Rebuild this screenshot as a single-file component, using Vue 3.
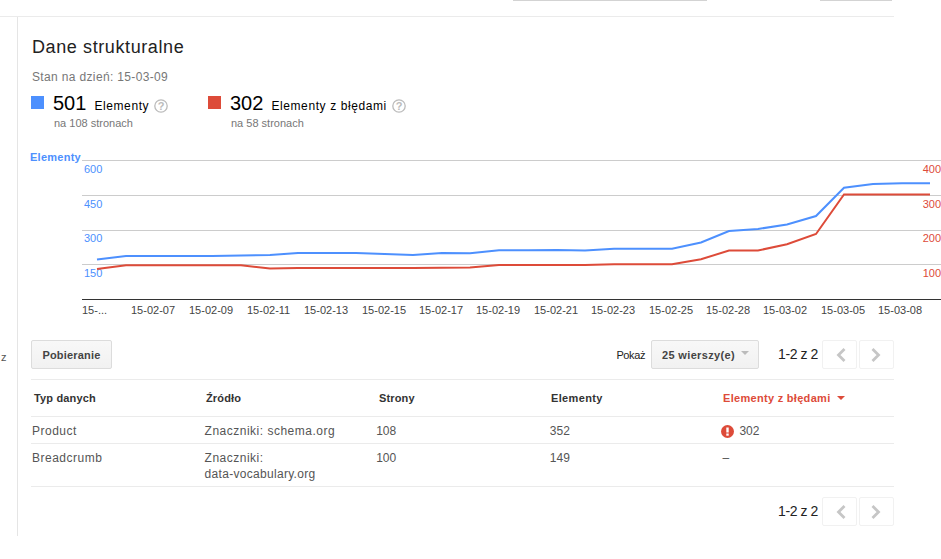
<script setup>
const grid = [10.5, 45.5, 80.5, 114.5]
const shift = a => a.map(p => [p[0], p[1] - 150])
const blue = shift([[97,259.5],[126,256],[212,256],[270,255],[298,253],[356,253],[413,255],[442,253],[470,253.3],[499,250.3],[528,250.3],[557,250],[585,250.5],[614,248.7],[672,248.7],[701,242.5],[729,231],[758,229],[787,224.5],[816,216],[844,187.7],[873,184],[902,183.2],[930,183.2]])
const red = shift([[97,269],[126,265.3],[241,265.3],[270,268.5],[298,268],[413,268],[470,267.5],[499,265],[585,265],[614,264.3],[672,264.3],[701,259.3],[729,250.5],[758,250.5],[787,244.3],[816,234],[844,194.5],[930,194.5]])
const pts = a => a.map(p => p.join(',')).join(' ')
const leftLabels = [['600',23],['450',58],['300',92],['150',127]]
const rightLabels = [['400',23],['300',58],['200',92],['100',127]]
const dates = [['15-...',82],['15-02-07',131],['15-02-09',189],['15-02-11',247],['15-02-13',304],['15-02-15',362],['15-02-17',419],['15-02-19',476],['15-02-21',534],['15-02-23',591],['15-02-25',649],['15-02-28',706],['15-03-02',763],['15-03-05',821],['15-03-08',878]]
const rows = [
  { type: 'Product', source: ['Znaczniki: schema.org'], pages: '108', items: '352', errors: '302' },
  { type: 'Breadcrumb', source: ['Znaczniki:', 'data-vocabulary.org'], pages: '100', items: '149', errors: '' }
]
</script>

<template>
  <div class="page">
    <div class="top-stubs">
      <span class="stub stub-a"></span>
      <span class="stub stub-b"></span>
    </div>
    <div class="shell">
      <span class="stray">z</span>
      <main class="panel">
        <h1 class="title">Dane strukturalne</h1>
        <p class="date">Stan na dzień: 15-03-09</p>
        <div class="legend">
          <div class="legend-item first">
            <span class="swatch blue"></span>
            <div>
              <div class="legend-head">
                <span class="num">501</span><span class="lab">Elementy</span>
                <svg class="help" viewBox="0 0 14 14"><circle cx="7" cy="7" r="6.2" fill="none" stroke="#bbb" stroke-width="1.3"/><text x="7" y="10.5" text-anchor="middle" class="help-t">?</text></svg>
              </div>
              <div class="legend-sub">na 108 stronach</div>
            </div>
          </div>
          <div class="legend-item">
            <span class="swatch red"></span>
            <div>
              <div class="legend-head">
                <span class="num">302</span><span class="lab">Elementy z błędami</span>
                <svg class="help" viewBox="0 0 14 14"><circle cx="7" cy="7" r="6.2" fill="none" stroke="#bbb" stroke-width="1.3"/><text x="7" y="10.5" text-anchor="middle" class="help-t">?</text></svg>
              </div>
              <div class="legend-sub">na 58 stronach</div>
            </div>
          </div>
        </div>
        <svg class="chart" width="941" height="190" viewBox="0 0 941 190">
          <text x="30" y="11" class="axis-title">Elementy</text>
          <line v-for="y in grid" :key="y" x1="82" x2="941" :y1="y" :y2="y" stroke="#ccc"/>
          <line x1="82" x2="941" y1="149.5" y2="149.5" stroke="#333"/>
          <text v-for="l in leftLabels" :key="l[0]" x="84" :y="l[1]" class="t-blue">{{ l[0] }}</text>
          <text v-for="l in rightLabels" :key="l[0]" x="941" :y="l[1]" text-anchor="end" class="t-red">{{ l[0] }}</text>
          <polyline :points="pts(blue)" fill="none" stroke="#4d90fe" stroke-width="2"/>
          <polyline :points="pts(red)" fill="none" stroke="#dd4b39" stroke-width="2"/>
          <text v-for="d in dates" :key="d[0]" :x="d[1]" y="164" class="t-date">{{ d[0] }}</text>
        </svg>
        <div class="toolbar">
          <button class="btn download">Pobieranie</button>
          <div class="tools-right">
            <span class="show">Pokaż</span>
            <button class="btn select">25 wierszy(e)<i class="caret"></i></button>
            <span class="range">1-2 z 2</span>
            <div class="pager">
              <span class="pg"><svg width="10" height="14" viewBox="0 0 10 14"><path d="M8.500 1 2.500 7 8.500 13" fill="none" stroke="#c6c6c6" stroke-width="2.800"/></svg></span>
              <span class="pg"><svg width="10" height="14" viewBox="0 0 10 14"><path d="M1.500 1 7.500 7 1.500 13" fill="none" stroke="#c6c6c6" stroke-width="2.800"/></svg></span>
            </div>
          </div>
        </div>
        <div class="table">
          <div class="tr thead">
            <div>Typ danych</div><div>Źródło</div><div>Strony</div><div class="wide">Elementy</div>
            <div class="sorted">Elementy z błędami<i class="sort-caret"></i></div>
          </div>
          <div v-for="r in rows" :key="r.type" class="tr tbody">
            <div class="word">{{ r.type }}</div>
            <div class="word"><span v-for="line in r.source" :key="line" class="line">{{ line }}</span></div>
            <div>{{ r.pages }}</div>
            <div>{{ r.items }}</div>
            <div v-if="r.errors" class="err">
              <svg width="13" height="13" viewBox="0 0 13 13"><circle cx="6.500" cy="6.500" r="6.500" fill="#dd4b39"/><rect x="5.300" y="2.500" width="2.400" height="5" fill="#fff"/><rect x="5.300" y="8.500" width="2.400" height="2.200" fill="#fff"/></svg>
              <span>{{ r.errors }}</span>
            </div>
            <div v-else class="dash">–</div>
          </div>
        </div>
        <div class="footer">
          <span class="range">1-2 z 2</span>
          <div class="pager">
            <span class="pg"><svg width="10" height="14" viewBox="0 0 10 14"><path d="M8.500 1 2.500 7 8.500 13" fill="none" stroke="#c6c6c6" stroke-width="2.800"/></svg></span>
            <span class="pg"><svg width="10" height="14" viewBox="0 0 10 14"><path d="M1.500 1 7.500 7 1.500 13" fill="none" stroke="#c6c6c6" stroke-width="2.800"/></svg></span>
          </div>
        </div>
      </main>
    </div>
  </div>
</template>

<style>
html, body { margin: 0; background: #fff; overflow: hidden; }
</style>

<style scoped>
.page { width: 941px; height: 559px; overflow: hidden; font-family: "Liberation Sans", Arial, sans-serif; color: #333; }
.top-stubs { height: 1px; position: relative; }
.stub { position: absolute; top: 0; height: 1px; background: #d3d3d3; }
.stub-a { left: 513px; width: 194px; }
.stub-b { left: 820px; width: 72px; }
.shell { width: 894px; margin-top: 15px; border-top: 1px solid #ebebeb; display: flex; box-sizing: border-box; position: relative; }
.stray { position: absolute; left: 1px; top: 334px; font-size: 11px; color: #555; }
.panel { margin-left: 17px; padding: 20px 0 10px 13px; border-left: 1px solid #e5e5e5; flex: 1; min-width: 0; }
.title { margin: 0 0 0 1px; font-size: 18px; font-weight: 400; line-height: 21px; color: #222; letter-spacing: .6px; }
.date { margin: 12px 0 0 1px; font-size: 12px; line-height: 14px; color: #777; letter-spacing: .35px; }
.legend { display: flex; margin-top: 6px; }
.legend-item { display: flex; }
.legend-item.first { width: 177px; }
.swatch { width: 13px; height: 13px; margin: 6px 9px 0 0; flex: none; }
.swatch.blue { background: #4d90fe; }
.swatch.red { background: #dd4b39; }
.legend-head { display: flex; align-items: center; height: 25px; margin-top: 1px; color: #000; }
.num { font-size: 20px; }
.lab { font-size: 12px; padding-top: 4px; margin-left: 8px; letter-spacing: .6px; white-space: nowrap; }
.help { width: 14px; height: 14px; margin-left: 5px; margin-top: 5px; flex: none; }
.help-t { font-size: 11px; font-weight: 700; fill: #bbb; font-family: "Liberation Sans", sans-serif; }
.legend-sub { font-size: 11px; line-height: 13px; color: #777; margin-left: 1px; margin-top: 1px; }
.chart { display: block; margin: 20px 0 0 -31px; font-family: "Liberation Sans", Arial, sans-serif; }
.axis-title { font-size: 11px; font-weight: 700; fill: #4d90fe; letter-spacing: .25px; }
.t-blue { font-size: 11px; fill: #4d90fe; }
.t-red { font-size: 11px; fill: #dd4b39; }
.t-date { font-size: 11px; fill: #444; }
.toolbar { display: flex; justify-content: space-between; height: 39px; }
.btn { height: 29px; box-sizing: border-box; border: 1px solid #dcdcdc; border-radius: 2px; background: linear-gradient(#f8f8f8, #f1f1f1); font: 700 11px "Liberation Sans", Arial, sans-serif; color: #444; padding: 0 10px; letter-spacing: .2px; white-space: nowrap; }
.download { width: 81px; padding: 0; }
.tools-right { display: flex; align-items: flex-start; }
.show { font-size: 11px; color: #222; margin-right: 6px; line-height: 30px; letter-spacing: -.4px; }
.select { width: 108px; text-align: left; display: flex; align-items: center; letter-spacing: .35px; }
.caret { margin-left: 6px; margin-top: -3px; border-style: solid; border-color: #bbb transparent transparent; border-width: 4px 4px 0; width: 0; height: 0; }
.range { font-size: 14px; color: #222; line-height: 29px; margin-left: 19px; margin-right: 4px; letter-spacing: -.4px; }
.pager { display: flex; gap: 2px; }
.pg { width: 35px; height: 29px; box-sizing: border-box; border: 1px solid #f1f1f1; border-radius: 2px; display: flex; align-items: center; justify-content: center; }
.pg:first-child svg { margin-left: 2px; }
.pg:last-child svg { margin-right: 2px; }
.table { border-top: 1px solid #ebebeb; }
.tr { display: grid; border-bottom: 1px solid #ebebeb; box-sizing: border-box; }
.thead { height: 37px; font-size: 11px; font-weight: 700; color: #333; line-height: 36px; padding-left: 3px; grid-template-columns: 172px 173px 172px 172px 172px; letter-spacing: .15px; }
.wide { letter-spacing: .35px; }
.sorted { color: #dd4b39; display: flex; align-items: center; letter-spacing: .3px; }
.sort-caret { margin-left: 6px; border-style: solid; border-color: #dd4b39 transparent transparent; border-width: 4px 4px 0; width: 0; height: 0; }
.tbody { font-size: 12px; color: #555; line-height: 16px; padding: 6px 0 4px 1px; grid-template-columns: 172.6px 171.6px 173.6px 172.6px 172.6px; }
.word { letter-spacing: .5px; }
.line { display: block; white-space: nowrap; }
.line + .line { letter-spacing: .3px; }
.err { display: flex; align-items: center; gap: 5px; margin-left: -1px; }
.footer { display: flex; justify-content: flex-end; align-items: center; margin-top: 10px; }
</style>
